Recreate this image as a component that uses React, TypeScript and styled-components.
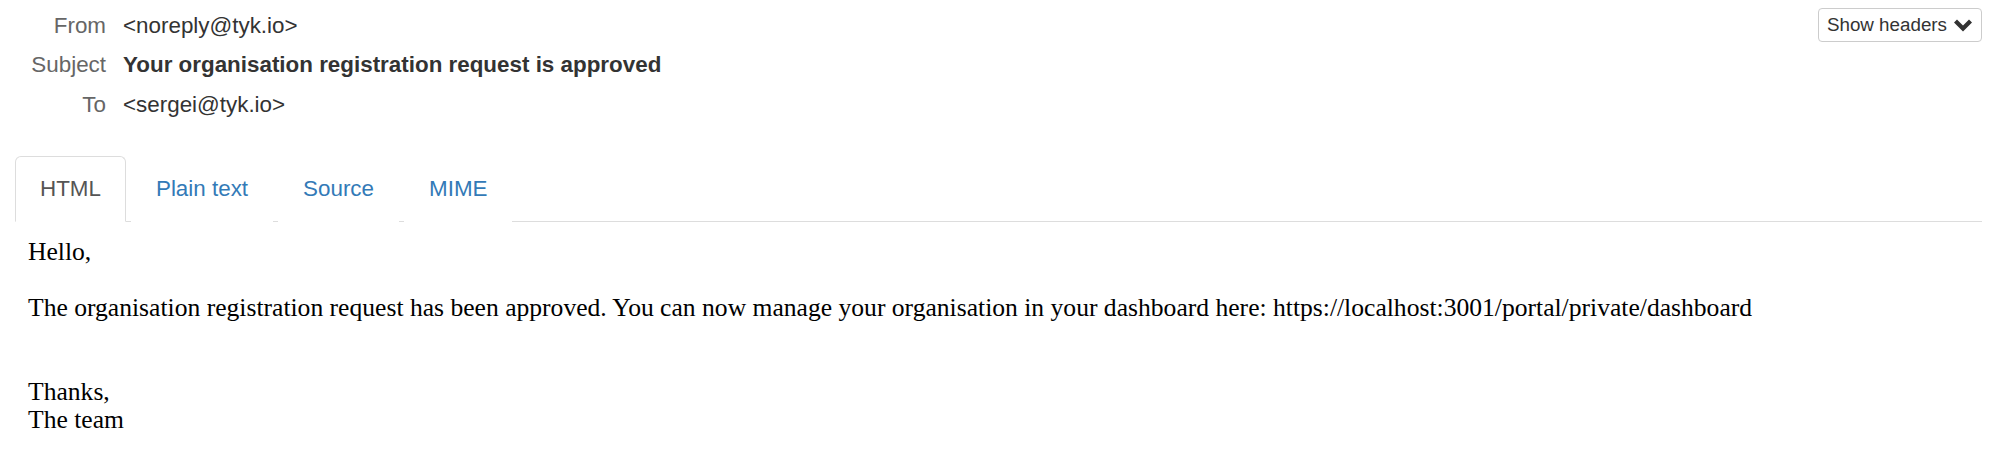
import { useState } from 'react'
import styled, { createGlobalStyle } from 'styled-components'

const GlobalStyle = createGlobalStyle`
  html, body {
    margin: 0;
    padding: 0;
    background: #fff;
  }

  body {
    font-family: 'Liberation Sans', Arial, Helvetica, sans-serif;
    color: #333;
  }
`

const headers = [
  { label: 'From', value: '<noreply@tyk.io>' },
  { label: 'Subject', value: 'Your organisation registration request is approved', strong: true },
  { label: 'To', value: '<sergei@tyk.io>' },
]

const tabs = ['HTML', 'Plain text', 'Source', 'MIME']

export default function App() {
  const [activeTab, setActiveTab] = useState('HTML')

  return (
    <>
      <GlobalStyle />
      <MessageView>
        <HeaderBar>
          <HeaderList>
            {headers.map((h) => (
              <HeaderRow key={h.label}>
                <HeaderLabel>{h.label}</HeaderLabel>
                <HeaderValue $strong={h.strong}>{h.value}</HeaderValue>
              </HeaderRow>
            ))}
          </HeaderList>

          <ToggleButton type="button">
            Show headers
            <ChevronDown />
          </ToggleButton>
        </HeaderBar>

        <TabList>
          {tabs.map((t) => (
            <Tab key={t} $active={t === activeTab} onClick={() => setActiveTab(t)}>
              {t}
            </Tab>
          ))}
        </TabList>

        <MailBody>
          Hello,
          <br />
          <br />
          The organisation registration request has been approved. You can now manage your
          organisation in your dashboard here: https://localhost:3001/portal/private/dashboard
          <br />
          <br />
          <br />
          Thanks,
          <br />
          The team
        </MailBody>
      </MessageView>
    </>
  )
}

// glyphicon style chevron, thick and filled
const ChevronDown = () => (
  <svg width="18" height="13" viewBox="0 0 18 13" aria-hidden="true">
    <polygon points="0,3.6 3,0.6 9,6.6 15,0.6 18,3.6 9,12.6" fill="#333" />
  </svg>
)

const MessageView = styled.div`
  width: 2000px;
  box-sizing: border-box;
  padding: 0 18px 0 15px;
`

const HeaderBar = styled.div`
  display: flex;
  justify-content: space-between;
  align-items: flex-start;
`

const HeaderList = styled.div`
  display: grid;
  grid-template-columns: 91px auto;
  column-gap: 17px;
  row-gap: 7.5px;
  padding-top: 9.5px;
`

const HeaderRow = styled.div`
  display: contents;
`

const HeaderLabel = styled.div`
  text-align: right;
  font-size: 22.4px;
  line-height: 32px;
  color: #666;
  white-space: nowrap;
`

const HeaderValue = styled.div<{ $strong?: boolean }>`
  font-size: 22.4px;
  line-height: 32px;
  color: #333;
  font-weight: ${(p) => (p.$strong ? 700 : 400)};
`

const ToggleButton = styled.button`
  margin-top: 8px;
  display: flex;
  align-items: center;
  gap: 7px;
  height: 34px;
  padding: 0 9px 0 8px;
  border: 1px solid #ccc;
  border-radius: 4px;
  background: #fff;
  color: #333;
  font-family: 'Liberation Sans', Arial, sans-serif;
  font-size: 18.8px;
  cursor: pointer;

  svg {
    display: block;
    margin-top: 1px;
  }
`

const TabList = styled.div`
  display: flex;
  gap: 5px;
  margin-top: 35px;
  border-bottom: 1px solid #ddd;
`

const Tab = styled.div<{ $active?: boolean }>`
  padding: 16px 24px;
  line-height: 32px;
  font-size: 22.4px;
  margin-bottom: -1px;
  border: 1px solid ${(p) => (p.$active ? '#ddd' : 'transparent')};
  border-bottom-color: ${(p) => (p.$active ? '#fff' : 'transparent')};
  border-radius: 6px 6px 0 0;
  background: #fff;
  color: ${(p) => (p.$active ? '#555' : '#337ab7')};
  cursor: pointer;
`

const MailBody = styled.div`
  padding: 16px 13px;
  font-family: 'Liberation Serif', 'Times New Roman', serif;
  font-size: 25.6px;
  line-height: 28px;
  color: #000;
`
